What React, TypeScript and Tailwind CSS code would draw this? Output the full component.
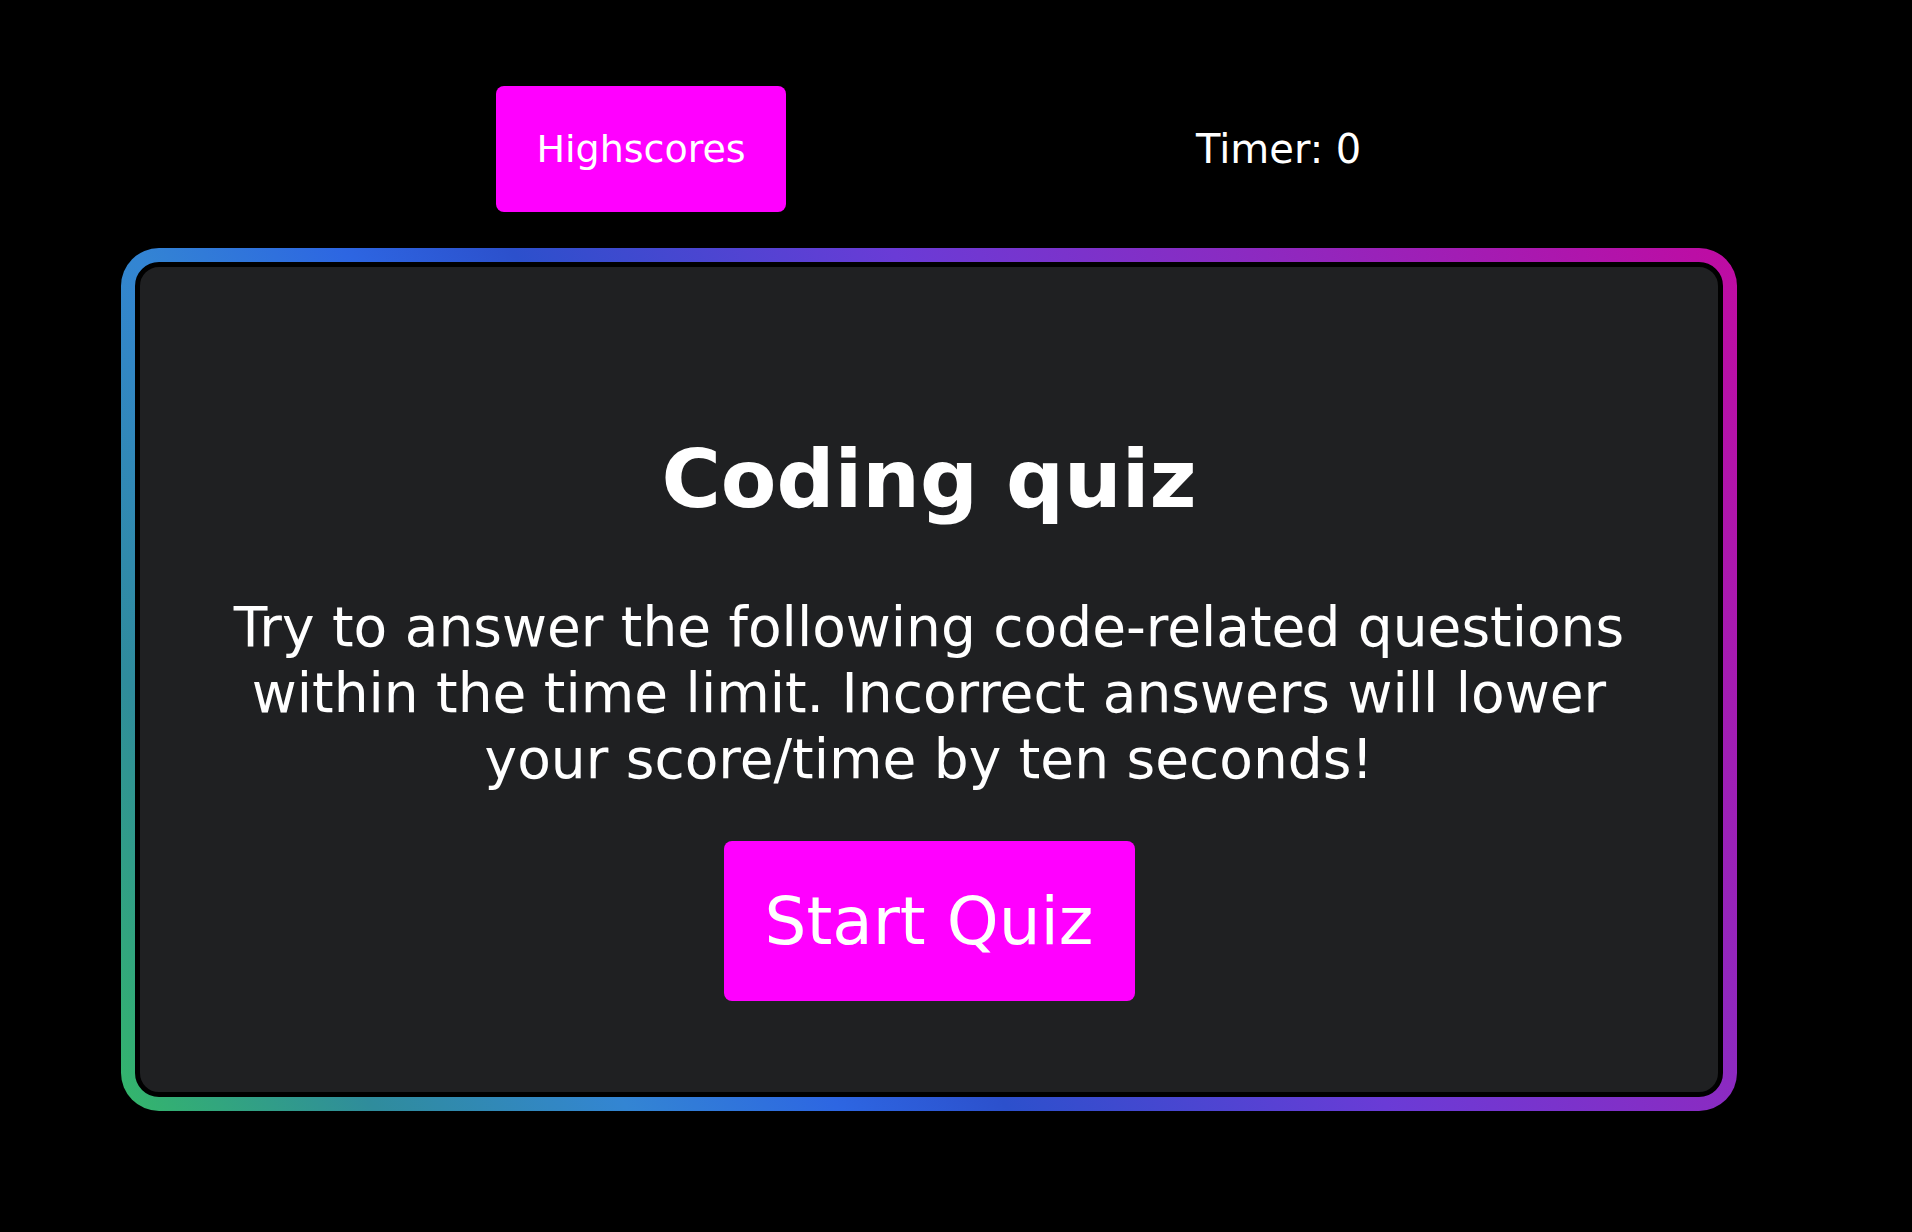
export default function App() {
  return (
    <div className="min-h-screen bg-black font-['DejaVu_Sans','Verdana',sans-serif] text-white">
      <header className="flex items-center pl-[496px] pt-[86px]">
        <button className="flex h-[126px] w-[290px] items-center justify-center rounded-[8px] bg-[#ff00ff] text-[38px] text-white">
          Highscores
        </button>
        <div className="ml-[410px] text-[40px]">Timer: 0</div>
      </header>

      <main className="ml-[121px] mt-[36px] w-[1616px]">
        <div className="h-[863px] rounded-[38px] bg-[linear-gradient(60deg,#34b76a_0%,#2f8c9c_12%,#3385d3_24%,#2d66e2_34%,#2c50cc_42%,#6a3bd6_60%,#8a2bc2_76%,#c00ba2_100%)] p-[14px]">
          <section className="flex h-full flex-col items-center rounded-[24px] border-[5px] border-black bg-[#1f2022] pt-[165px]">
            <h1 className="text-[81px] font-bold leading-[94px]">Coding quiz</h1>
            <p className="mt-[68px] max-w-[1440px] text-center text-[55px] leading-[66px]">
              Try to answer the following code-related questions within the time limit. Incorrect answers will lower your score/time by ten seconds!
            </p>
            <button className="mt-[49px] flex h-[160px] w-[411px] items-center justify-center rounded-[8px] bg-[#ff00ff] text-[66px] text-white">
              Start Quiz
            </button>
          </section>
        </div>
      </main>
    </div>
  )
}
